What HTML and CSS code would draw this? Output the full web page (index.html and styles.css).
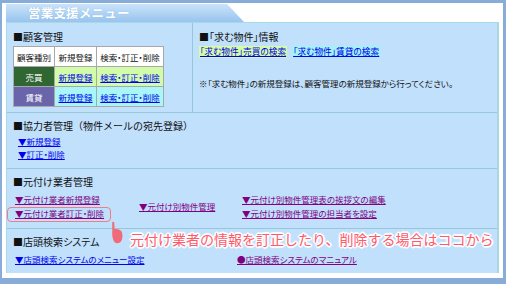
FILE: index.html
```html
<!DOCTYPE html>
<html lang="ja">
<head>
<meta charset="utf-8">
<link rel="stylesheet" href="styles.css">
</head>
<body>
<div class="frame">
  <div class="panel">
    <div class="tab"><span class="tab-title">営業支援メニュー</span></div>
    <div class="content">
      <section class="sec sec1">
        <div class="col-left">
          <h2 class="hd">■顧客管理</h2>
          <div class="ctable">
            <div class="c head">顧客種別</div>
            <div class="c head">新規登録</div>
            <div class="c head">検索・訂正・削除</div>
            <div class="c lbl-sale">売買</div>
            <div class="c sale"><a href="#">新規登録</a></div>
            <div class="c sale"><a href="#">検索・訂正・削除</a></div>
            <div class="c lbl-rent">賃貸</div>
            <div class="c rent"><a href="#">新規登録</a></div>
            <div class="c rent"><a href="#">検索・訂正・削除</a></div>
          </div>
        </div>
        <div class="col-right">
          <h2 class="hd hd-palt">■「求む物件」情報</h2>
          <div class="chips">
            <a href="#" class="chip chip-green">「求む物件」売買の検索</a>
            <a href="#" class="chip chip-cyan">「求む物件」賃貸の検索</a>
          </div>
          <p class="note">※「求む物件」の新規登録は、顧客管理の新規登録から行ってください。</p>
        </div>
      </section>

      <section class="sec sec2">
        <h2 class="hd">■協力者管理（物件メールの宛先登録）</h2>
        <ul class="links">
          <li><a href="#">▼新規登録</a></li>
          <li><a href="#">▼訂正・削除</a></li>
        </ul>
      </section>

      <section class="sec sec3">
        <h2 class="hd">■元付け業者管理</h2>
        <div class="grid3">
          <div class="g-col">
            <a href="#" class="v">▼元付け業者新規登録</a>
            <a href="#" class="v">▼元付け業者訂正・削除</a>
          </div>
          <div class="g-col g-mid">
            <a href="#" class="v">▼元付け別物件管理</a>
          </div>
          <div class="g-col">
            <a href="#" class="v">▼元付け別物件管理表の挨拶文の編集</a>
            <a href="#" class="v">▼元付け別物件管理の担当者を設定</a>
          </div>
        </div>
      </section>

      <section class="sec sec4">
        <h2 class="hd hd-palt">■店頭検索システム</h2>
        <div class="grid2">
          <a href="#">▼店頭検索システムのメニュー設定</a>
          <a href="#" class="v">●店頭検索システムのマニュアル</a>
        </div>
      </section>

      <div class="hl-box"></div>
      <svg class="hand" width="16" height="24" viewBox="0 0 16 24">
        <path d="M3.2 1.5 C3.2 0.6 5.2 0.6 5.2 1.5 L5.6 8.2 C8 7.6 11.5 8.4 12.6 10.5 C14 13.5 13.6 18.5 11.8 20.8 C10.2 22.8 6.4 22.6 5 20.4 C3.6 18.2 2.8 13.5 3.3 9.8 Z" fill="#f06a78"/>
      </svg>
      <div class="callout">元付け業者の情報を訂正したり、削除する場合はココから</div>
    </div>
  </div>
</div>
</body>
</html>
```

FILE: styles.css
```css
* { box-sizing: border-box; }
html, body { margin: 0; padding: 0; }
body {
  font-family: "Noto Sans CJK JP", "Noto Sans", sans-serif;
  color: #111;
  background: #88acd8;
}
a { color: #0000ee; text-decoration: underline; }
a.v { color: #800080; }

.frame {
  width: 506px;
  height: 284px;
  background: #88acd8;
  padding: 3px 3px 6px 2px;
}
.panel {
  background: #fff;
  height: 275px;
  padding: 1px 4px 5px 4px;
  display: flex;
  flex-direction: column;
}
.tab {
  height: 18px;
  width: 238px;
  flex: none;
  background: linear-gradient(#cae3fa, #98c4ee);
  clip-path: polygon(0 0, 221px 0, 238px 100%, 0 100%);
  display: flex;
  align-items: center;
  padding-left: 22px;
}
.tab-title {
  color: #fff;
  font-size: 12.5px;
  font-weight: bold;
  letter-spacing: 0.2px;
  line-height: 14px;
  text-shadow: 0 0 1px #7aa8dc;
}
.content {
  position: relative;
  flex: 1;
  background: #c0e0fc;
  border: 1px solid #a8d8e4;
  border-right-width: 2px;
  border-bottom: none;
  display: flex;
  flex-direction: column;
}
.sec { border-top: 1px solid #94c8d8; }
.sec1 { border-top: none; display: flex; height: 89px; }

.hd {
  margin: 0;
  font-size: 10px;
  font-weight: normal;
  line-height: 14px;
  white-space: nowrap;
}
.hd-palt { font-feature-settings: "palt"; }

.col-left { width: 185px; padding: 7px 0 0 6px; }
.col-right { flex: 1; border-left: 1px solid #94c8d8; padding: 7px 0 0 6px; }

.ctable {
  margin-top: 2px;
  display: grid;
  grid-template-columns: 40px 41px 66px;
  grid-auto-rows: 19px;
  gap: 1px;
  padding: 1px;
  width: 151px;
  background: #a8a8a8;
}
.c {
  display: flex;
  align-items: center;
  justify-content: center;
  font-size: 8.5px;
  line-height: 10px;
  font-feature-settings: "palt";
  white-space: nowrap;
}
.head { background: #fff; }
.lbl-sale { background: #2f6632; color: #fff; }
.lbl-rent { background: #6a64aa; color: #fff; }
.sale { background: #d2fcaa; }
.rent { background: #a8f6f8; }

.chips { margin-top: 2px; display: flex; gap: 5px; }
.chip {
  font-size: 8.7px;
  line-height: 12px;
  height: 12px;
  padding: 0 1px;
  font-feature-settings: "palt";
  white-space: nowrap;
}
.chip-green { background: #d6fca4; }
.chip-cyan { background: #a4f2f4; }
.note {
  margin: 18px 0 0;
  font-size: 8.5px;
  line-height: 14px;
  font-feature-settings: "palt";
  white-space: nowrap;
}

.sec2 { padding: 6px 0 7px 6px; }
.links { list-style: none; margin: 2px 0 0; padding: 0 0 0 5px; }
.links li { font-size: 8.5px; line-height: 13px; font-feature-settings: "palt"; }

.sec3 { padding: 6px 0 8px 6px; }
.grid3 {
  margin-top: 3px;
  display: grid;
  grid-template-columns: 124px 103px auto;
  padding-left: 2px;
}
.g-col { display: flex; flex-direction: column; }
.g-mid { justify-content: center; }
.g-col a, .grid2 a {
  font-size: 8.5px;
  line-height: 14px;
  font-feature-settings: "palt";
  white-space: nowrap;
  align-self: flex-start;
}

.sec4 { flex: 1; padding: 6px 0 0 6px; }
.grid2 {
  margin-top: 3px;
  display: grid;
  grid-template-columns: 222px auto;
  padding-left: 2px;
}

.hl-box {
  position: absolute;
  left: 0;
  top: 184px;
  width: 104px;
  height: 15px;
  border: 1.5px solid #f27c84;
  border-radius: 4px;
}
.hand {
  position: absolute;
  left: 102px;
  top: 198px;
}
.callout {
  position: absolute;
  left: 123px;
  top: 208px;
  font-size: 14px;
  line-height: 17px;
  color: #ff5a6a;
  white-space: nowrap;
  text-shadow:
    1px 0 0 #fff, -1px 0 0 #fff, 0 1px 0 #fff, 0 -1px 0 #fff,
    1px 1px 0 #fff, -1px -1px 0 #fff, 1px -1px 0 #fff, -1px 1px 0 #fff,
    2px 0 1px #fff, -2px 0 1px #fff, 0 2px 1px #fff, 0 -2px 1px #fff;
}
```
